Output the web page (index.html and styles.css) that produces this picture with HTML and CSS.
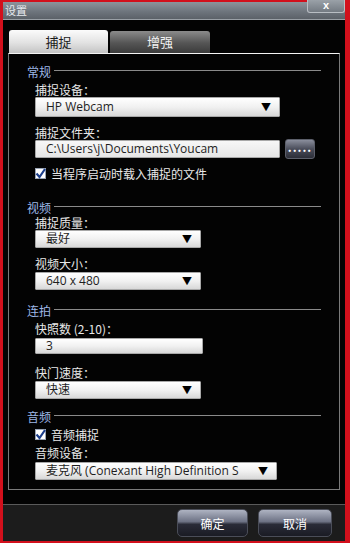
FILE: index.html
```html
<!DOCTYPE html>
<html lang="zh-CN">
<head>
<meta charset="UTF-8">
<title>设置</title>
<link rel="stylesheet" href="styles.css">
</head>
<body>

<div class="window">
  <div class="titlebar">
    <span class="title">设置</span>
    <span class="close">x</span>
  </div>

  <div class="tabs">
    <div class="tab active">捕捉</div>
    <div class="tab">增强</div>
  </div>

  <div class="panel">
    <div class="group-title"><span>常规</span></div>
    <div class="label mt3">捕捉设备：</div>
    <div class="select wide tall">HP Webcam<span class="arrow">▼</span></div>

    <div class="label mt8">捕捉文件夹：</div>
    <div class="path-row">
      <div class="input wide">C:\Users\j\Documents\Youcam</div>
      <div class="browse">.....</div>
    </div>

    <label class="check mt6">
      <span class="box"><svg width="11" height="11" viewBox="0 0 11 11"><path d="M1.5 5.5 L4.5 9 L10 1" fill="none" stroke="#1d3f8c" stroke-width="2.2"/></svg></span>
      当程序启动时载入捕捉的文件
    </label>

    <div class="group-title mt18"><span>视频</span></div>
    <div class="label">捕捉质量：</div>
    <div class="select short">最好<span class="arrow">▼</span></div>

    <div class="label mt8">视频大小：</div>
    <div class="select short mt1">640 x 480<span class="arrow">▼</span></div>

    <div class="group-title mt12"><span>连拍</span></div>
    <div class="label mt3">快照数 (2-10)：</div>
    <div class="input short num mt2">3</div>

    <div class="label mt11">快门速度：</div>
    <div class="select short mt1">快速<span class="arrow">▼</span></div>

    <div class="group-title mt9"><span>音频</span></div>
    <label class="check mt2">
      <span class="box"><svg width="11" height="11" viewBox="0 0 11 11"><path d="M1.5 5.5 L4.5 9 L10 1" fill="none" stroke="#1d3f8c" stroke-width="2.2"/></svg></span>
      音频捕捉
    </label>
    <div class="label mt3">音频设备：</div>
    <div class="select audio mt2">麦克风 (Conexant High Definition S<span class="arrow">▼</span></div>
  </div>

  <div class="footer">
    <button class="btn ok" type="button">确定</button>
    <button class="btn" type="button">取消</button>
  </div>
</div>

</body>
</html>
```

FILE: styles.css
```css
body {
    margin: 0;
    background: #000;
    font-family: "Noto Sans CJK SC", "Noto Sans", sans-serif;
    font-size: 12px;
}

.window {
    width: 350px;
    height: 543px;
    box-sizing: border-box;
    border-left: 3px solid #d2101c;
    border-right: 5px solid #d2101c;
    border-top: 2px solid #d2101c;
    border-bottom: 2px solid #d2101c;
    background: #030303;
    display: flex;
    flex-direction: column;
}

.titlebar {
    height: 18px;
    position: relative;
    background: linear-gradient(to bottom, #8d949c, #6c737b 60%, #5b6168);
    border-bottom: 1px solid #9aa0a6;
    box-sizing: border-box;
}

.title {
    display: block;
    padding-left: 2px;
    line-height: 16px;
    font-size: 11px;
    color: #e6e9ee;
}

.close {
    position: absolute;
    right: 0;
    top: -2px;
    width: 38px;
    height: 13px;
    box-sizing: border-box;
    border: 1px solid #b9bec4;
    border-top: none;
    border-radius: 0 0 3px 3px;
    background: linear-gradient(to bottom, #9aa1a8, #737a82);
    color: #fff;
    font-family: "Liberation Sans", sans-serif;
    font-weight: bold;
    font-size: 11px;
    line-height: 11px;
    text-align: center;
}

.tabs {
    display: flex;
    align-items: flex-end;
    margin-top: 10px;
    padding-left: 6px;
}

.tab {
    width: 100px;
    height: 22px;
    margin-left: 2px;
    box-sizing: border-box;
    border-radius: 3px 3px 0 0;
    background: linear-gradient(to bottom, #8b8b8b, #555 55%, #3b3b3b);
    color: #f2f2f2;
    text-align: center;
    line-height: 22px;
    font-size: 13px;
}

.tab.active {
    width: 99px;
    height: 23px;
    margin-left: 0;
    background: linear-gradient(to bottom, #fbfbfb, #e2e2e2 55%, #c4c4c4);
    color: #1a1a1a;
    line-height: 24px;
}

.panel {
    margin: 0 5px;
    border: 1px solid #7a7a7a;
    border-top-color: #f4f4f4;
    padding: 9px 0 9px 0;
    color: #e8e8e8;
}

.group-title {
    display: flex;
    align-items: center;
    margin: 0 18px 0 18px;
    height: 16px;
    color: #9db7e6;
    font-size: 12px;
}

.group-title::after {
    content: "";
    flex: 1;
    height: 1px;
    margin-left: 3px;
    margin-top: -1px;
    background: #8a8a8a;
}

.label {
    margin-left: 26px;
    height: 15px;
    line-height: 15px;
}

.select,
.input {
    position: relative;
    margin-left: 26px;
    height: 18px;
    box-sizing: border-box;
    border: 1px solid #a8a8a8;
    border-radius: 1px;
    background: linear-gradient(to bottom, #ffffff, #f1f1f1 50%, #d8d8d8);
    color: #1e1e1e;
    padding-left: 10px;
    line-height: 16px;
    font-family: "Open Sans", "Noto Sans CJK SC", sans-serif;
    font-size: 12px;
    white-space: nowrap;
    overflow: hidden;
}

.select.tall {
    height: 20px;
    line-height: 18px;
}

.wide {
    width: 245px;
}

.short {
    width: 166px;
}

.input.short {
    width: 168px;
}

.audio {
    width: 242px;
}

.num {
    height: 16px;
    line-height: 14px;
}

.arrow {
    position: absolute;
    right: 8px;
    top: 0;
    font-size: 10px;
    color: #000;
}

.path-row {
    display: flex;
    align-items: center;
    height: 20px;
    margin-top: -1px;
}

.path-row .input {
    background: linear-gradient(to bottom, #f7f7f7, #e6e6e6);
}

.browse {
    width: 30px;
    height: 20px;
    margin-left: 5px;
    box-sizing: border-box;
    border: 1px solid #5c5f6a;
    border-radius: 3px;
    background: linear-gradient(to bottom, #8a8e9c, #4a4d5a 50%, #2c2e38);
    color: #fff;
    text-align: center;
    line-height: 14px;
    font-weight: bold;
    letter-spacing: 1px;
}

.check {
    display: flex;
    align-items: center;
    margin-left: 26px;
    height: 16px;
}

.box {
    width: 11px;
    height: 11px;
    margin-right: 5px;
    background: #fff;
    border: 1px solid #9aa4b4;
    box-sizing: border-box;
    display: flex;
}

.box svg {
    margin: -1px;
}

.mt1 { margin-top: 1px; }
.mt2 { margin-top: 2px; }
.mt3 { margin-top: 3px; }
.mt6 { margin-top: 6px; }
.mt8 { margin-top: 8px; }
.mt9 { margin-top: 9px; }
.mt11 { margin-top: 11px; }
.mt12 { margin-top: 12px; }
.mt18 { margin-top: 18px; }

.footer {
    margin-top: auto;
    height: 37px;
    box-sizing: border-box;
    border-top: 1px solid #5a5a5a;
    background: #1c1c1c;
    display: flex;
    justify-content: flex-end;
    align-items: flex-start;
    gap: 10px;
    padding: 4px 13px 0 0;
}

.btn {
    width: 74px;
    height: 28px;
    border: 1px solid #4a4d58;
    border-radius: 5px;
    background: linear-gradient(to bottom, #aeb3c2, #6d7284 45%, #2a2c38 55%, #1a1b24);
    color: #fff;
    font-family: "Noto Sans CJK SC", sans-serif;
    font-size: 12px;
    padding: 0;
}

.btn.ok {
    width: 71px;
}
```
